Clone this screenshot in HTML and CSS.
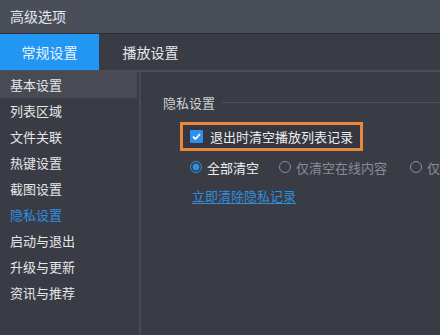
FILE: index.html
```html
<!DOCTYPE html>
<html>
<head>
<meta charset="utf-8">
<link rel="stylesheet" href="styles.css">
</head>
<body>
<div class="win">
  <div class="titlebar">高级选项</div>
  <div class="tabs">
    <div class="tab active">常规设置</div>
    <div class="tab">播放设置</div>
  </div>
  <div class="main">
    <div class="side">
      <div class="item sel">基本设置</div>
      <div class="item">列表区域</div>
      <div class="item">文件关联</div>
      <div class="item">热键设置</div>
      <div class="item">截图设置</div>
      <div class="item cur">隐私设置</div>
      <div class="item">启动与退出</div>
      <div class="item">升级与更新</div>
      <div class="item">资讯与推荐</div>
    </div>
    <div class="content">
      <div class="group-title"><span>隐私设置</span><div class="rule"></div></div>
      <div class="check-box">
        <span class="cb"><svg width="13" height="13" viewBox="0 0 13 13"><rect width="13" height="13" rx="1" fill="#2e8ff0"/><path d="M3 6.6 L5.5 9 L10 4" fill="none" stroke="#fff" stroke-width="1.8"/></svg></span>
        <span class="cb-label">退出时清空播放列表记录</span>
      </div>
      <div class="radios">
        <div class="radio on"><span class="dot"></span><span>全部清空</span></div>
        <div class="radio"><span class="dot"></span><span>仅清空在线内容</span></div>
        <div class="radio"><span class="dot"></span><span>仅清空本地内容</span></div>
      </div>
      <a class="link">立即清除隐私记录</a>
    </div>
  </div>
</div>
</body>
</html>
```
FILE: styles.css
```css
* { box-sizing: border-box; }
html, body { margin: 0; padding: 0; }
body {
  width: 440px; height: 335px; overflow: hidden;
  font-family: "Noto Sans CJK SC", "Noto Sans", sans-serif;
  background: #393c45;
}
.win { display: flex; flex-direction: column; height: 335px; }
.titlebar {
  height: 34px; background: #4a4e58; color: #e4e6ea;
  font-size: 14px; line-height: 33px; padding-left: 10px;
  border-bottom: 1px solid #2b2e34; flex: none;
}
.tabs {
  height: 38px; display: flex; background: #393c45;
  border-bottom: 2px solid #4a4d56; flex: none;
}
.tab {
  width: 99px; text-align: center; color: #e8e8e8;
  font-size: 14px; line-height: 36px;
}
.tab.active { background: #2296f3; color: #e9f3fd; }
.tab + .tab { margin-left: 2px; }
.main { flex: 1; display: flex; min-height: 0; }
.side {
  width: 141px; background: #393c45; border-right: 2px solid #474b54;
  padding-right: 2px; flex: none;
}
.item {
  height: 26px; line-height: 26px; padding-left: 10px;
  font-size: 13px; color: #e6e6e6;
}
.item.sel { background: #484b54; }
.item.cur { color: #2f8fe0; }
.content {
  flex: 1; min-width: 0; overflow: hidden;
  padding-left: 22px; padding-top: 20px; background: #393c45;
}
.group-title {
  display: flex; align-items: center; font-size: 13px; color: #cfd1d5;
  height: 20px;
}
.group-title .rule { flex: 1; height: 1px; background: #4c5059; margin-left: 7px; }
.check-box {
  margin-top: 10px; margin-left: 17px; width: 183px; height: 29px;
  border: 3px solid #e8883a; display: flex; align-items: center;
  padding-left: 7px; background: #343740;
}
.cb { width: 13px; height: 13px; display: flex; flex: none; }
.cb-label { margin-left: 7px; font-size: 13px; color: #eeeeee; white-space: nowrap; }
.radios {
  display: flex; margin-left: 27px; margin-top: 5px; height: 22px;
  align-items: center; white-space: nowrap;
}
.radio { display: flex; align-items: center; font-size: 13px; color: #8a8d94; margin-right: 23px; flex: none; }
.radio.on { color: #eeeeee; margin-right: 20px; }
.dot {
  width: 12px; height: 12px; border-radius: 50%; border: 1px solid #8a8d94;
  margin-right: 5px; flex: none;
}
.radio.on .dot { border-color: #2f8fe0; background: radial-gradient(circle, #2f8fe0 0 3.2px, transparent 3.7px); }
.link {
  display: inline-block; margin-left: 29px; margin-top: 8px;
  font-size: 13px; color: #2f8fdc; text-decoration: underline; text-underline-offset: 2px;
}
```
